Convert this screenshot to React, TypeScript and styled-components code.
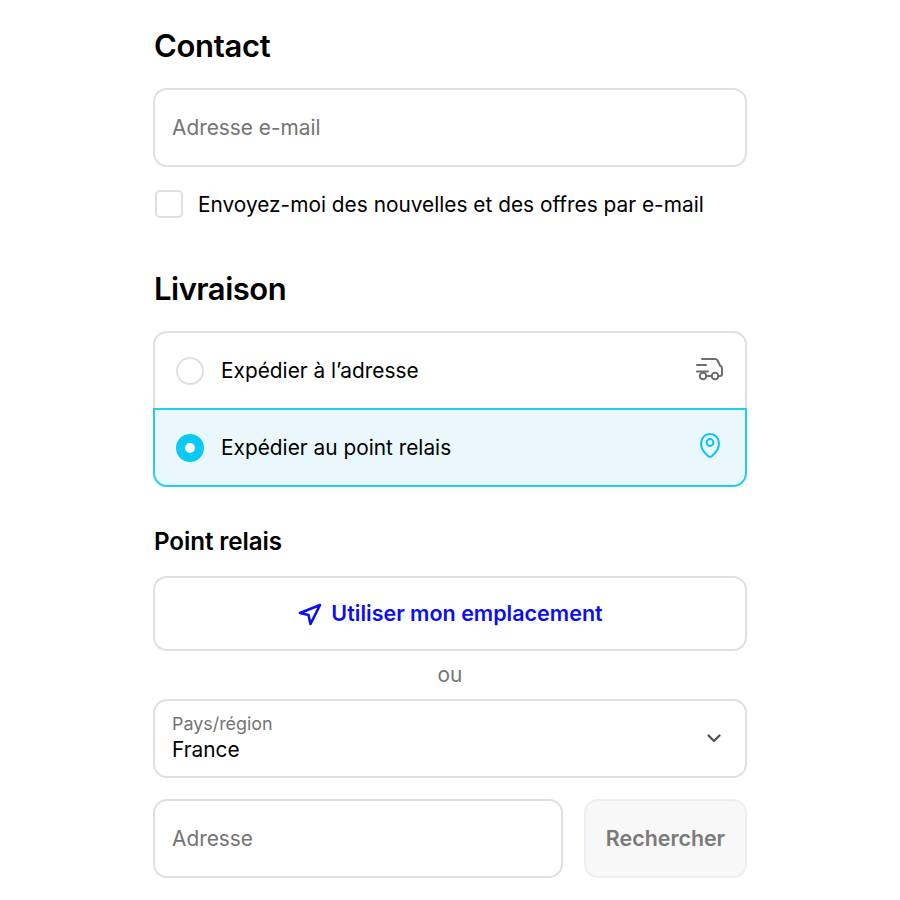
import React from 'react';
import styled, { createGlobalStyle } from 'styled-components';

const GlobalStyle = createGlobalStyle`
  html, body {
    margin: 0;
    padding: 0;
    background: #fff;
  }
  body {
    font-family: Inter, "Liberation Sans", sans-serif;
    color: #000;
  }
  * {
    box-sizing: border-box;
  }
`;

const Page = styled.div`
  width: 594px;
  margin: 0 0 0 153px;
  padding-top: 27px;
  display: flex;
  flex-direction: column;
`;

const Heading = styled.h2`
  margin: 0;
  padding-left: 1px;
  font-size: 31px;
  line-height: 38px;
  font-weight: 600;
  letter-spacing: -0.3px;
`;

const SubHeading = styled.h3`
  margin: 40px 0 19px;
  padding-left: 1px;
  font-size: 24.2px;
  line-height: 30px;
  font-weight: 600;
  letter-spacing: -0.1px;
`;

const Field = styled.div`
  flex: 1;
  height: 79px;
  display: flex;
  align-items: center;
  padding: 0 17px;
  border: 2px solid #e0e0e0;
  border-radius: 14px;
  font-size: 20.85px;
  color: #747474;
`;

const EmailField = styled(Field)`
  flex: none;
  margin-top: 23px;
`;

const CheckRow = styled.label`
  display: flex;
  align-items: center;
  gap: 15px;
  margin: 23px 0 0 2px;
  height: 28px;
  font-size: 20.85px;
`;

const CheckBox = styled.span`
  width: 28px;
  height: 28px;
  border: 2px solid #e0e0e0;
  border-radius: 5px;
`;

const ShippingHeading = styled(Heading)`
  margin: 52px 0 23px;
  letter-spacing: -0.5px;
`;

const Options = styled.div`
  display: flex;
  flex-direction: column;
  height: 156px;
`;

const Option = styled.div<{ $selected?: boolean }>`
  height: ${p => (p.$selected ? 79 : 77)}px;
  display: flex;
  align-items: center;
  padding: 0 22px 0 21px;
  gap: 17px;
  font-size: 20.85px;
  border: 2px solid ${p => (p.$selected ? '#23cdee' : '#e0e0e0')};
  border-bottom-width: ${p => (p.$selected ? 2 : 0)}px;
  border-radius: ${p => (p.$selected ? '0 0 14px 14px' : '14px 14px 0 0')};
  background: ${p => (p.$selected ? '#eaf8fe' : '#fff')};
`;

const OptionLabel = styled.span`
  flex: 1;
`;

const Radio = styled.span<{ $selected?: boolean }>`
  width: 28px;
  height: 28px;
  border-radius: 50%;
  display: flex;
  align-items: center;
  justify-content: center;
  border: ${p => (p.$selected ? '9px solid #0cc9f4' : '2px solid #e0e0e0')};
  background: #fff;
`;

const OptionIcon = styled.svg`
  width: 28px;
  height: 28px;
  flex: none;
  fill: none;
  stroke: currentColor;
  stroke-width: 2;
  stroke-linecap: round;
  stroke-linejoin: round;
`;

const TruckIcon = styled(OptionIcon)`
  color: #6d6d6d;
`;

const PinIcon = styled(OptionIcon)`
  color: #0cc4ee;
  margin-top: -2px;
`;

const LocationButton = styled.button`
  height: 75px;
  display: flex;
  align-items: center;
  justify-content: center;
  gap: 8px;
  padding: 0 0 2px;
  background: #fff;
  border: 2px solid #e0e0e0;
  border-radius: 14px;
  color: #0a0ff0;
  font-family: inherit;
  font-size: 21.5px;
  font-weight: 600;
`;

const LocationIcon = styled.svg`
  width: 26px;
  height: 26px;
  fill: none;
  stroke: currentColor;
  stroke-width: 2.6;
  stroke-linecap: round;
  stroke-linejoin: round;
`;

const Divider = styled.div`
  height: 48px;
  display: flex;
  align-items: center;
  justify-content: center;
  padding-bottom: 1px;
  font-size: 20.85px;
  color: #747474;
`;

const SelectBox = styled.div`
  height: 79px;
  display: flex;
  align-items: center;
  justify-content: space-between;
  padding: 0 22px 2px 17px;
  border: 2px solid #e0e0e0;
  border-radius: 14px;
`;

const SelectText = styled.div`
  display: flex;
  flex-direction: column;
`;

const SelectLabel = styled.span`
  font-size: 17.9px;
  line-height: 24px;
  color: #747474;
`;

const SelectValue = styled.span`
  font-size: 20.85px;
  line-height: 28px;
`;

const Chevron = styled.svg`
  width: 18px;
  height: 18px;
  fill: none;
  stroke: #555;
  stroke-width: 2.4;
  stroke-linecap: round;
  stroke-linejoin: round;
`;

const SearchRow = styled.div`
  display: flex;
  gap: 21px;
  margin-top: 21px;
`;

const SearchButton = styled.button`
  width: 163px;
  height: 79px;
  padding: 0 0 2px;
  background: #f8f8f8;
  border: 2px solid #efefef;
  border-radius: 14px;
  color: #7a7a7a;
  font-family: inherit;
  font-size: 21.4px;
  font-weight: 600;
`;

const App = () => (
  <>
    <GlobalStyle />
    <Page>
      <Heading>Contact</Heading>
      <EmailField>Adresse e-mail</EmailField>
      <CheckRow>
        <CheckBox />
        Envoyez-moi des nouvelles et des offres par e-mail
      </CheckRow>

      <ShippingHeading>Livraison</ShippingHeading>
      <Options>
        <Option>
          <Radio />
          <OptionLabel>Expédier à l’adresse</OptionLabel>
          <TruckIcon viewBox="0 0 28 28">
            <path d="M7 2h13c1.200 0 2 .5 2.600 1.500L25 8.500c1.300.6 2 1.700 2 3V17c0 1.300-.8 2-2 2h-1.700" />
            <path d="M16.700 19h-5.400" />
            <path d="M2 8h9" />
            <path d="M2 14.500h11" />
            <circle cx="8" cy="19" r="3.300" />
            <circle cx="20" cy="19" r="3.300" />
          </TruckIcon>
        </Option>
        <Option $selected>
          <Radio $selected />
          <OptionLabel>Expédier au point relais</OptionLabel>
          <PinIcon viewBox="0 0 28 28">
            <path d="M15 24c-1 0-1.700-.6-2.300-1.200C9.500 20 6 16 6 10.500 6 5 10 1 15 1s9 4 9 9.500c0 5.500-3.500 9.500-6.700 12.300-.6.600-1.300 1.200-2.300 1.200z" />
            <circle cx="15" cy="9.500" r="3.400" />
          </PinIcon>
        </Option>
      </Options>

      <SubHeading>Point relais</SubHeading>
      <LocationButton>
        <LocationIcon viewBox="0 0 26 26">
          <path d="M3 13 23 5 13.500 24 11.500 15z" />
        </LocationIcon>
        Utiliser mon emplacement
      </LocationButton>
      <Divider>ou</Divider>
      <SelectBox>
        <SelectText>
          <SelectLabel>Pays/région</SelectLabel>
          <SelectValue>France</SelectValue>
        </SelectText>
        <Chevron viewBox="0 0 18 18">
          <path d="M3.500 6.500 9 12l5.500-5.500" />
        </Chevron>
      </SelectBox>
      <SearchRow>
        <Field>Adresse</Field>
        <SearchButton>Rechercher</SearchButton>
      </SearchRow>
    </Page>
  </>
);

export default App;
